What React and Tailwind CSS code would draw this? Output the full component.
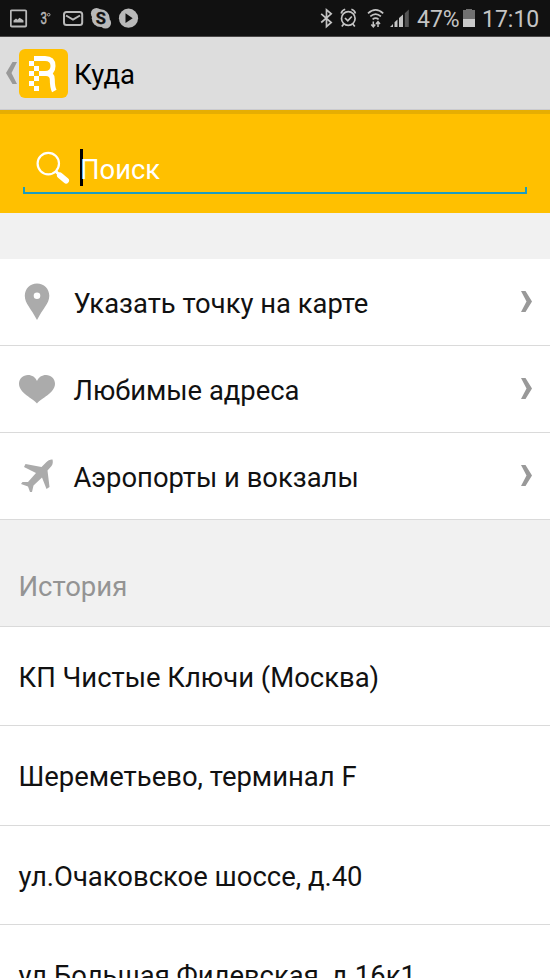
import React from 'react';

const menuItems = [
  { id: 'map', label: 'Указать точку на карте' },
  { id: 'favorites', label: 'Любимые адреса' },
  { id: 'airports', label: 'Аэропорты и вокзалы' },
];

const history = [
  'КП Чистые Ключи (Москва)',
  'Шереметьево, терминал F',
  'ул.Очаковское шоссе, д.40',
  'ул.Большая Филевская, д.16к1',
];

const StatusBar = () => {
  return (
    <div className="flex h-[37px] shrink-0 items-center justify-between border-b border-[#4a4848] bg-[#111] pr-[11px] pl-[10px] text-[#c4c4c4]">
      <svg width="130" height="36" viewBox="10 0 130 36" fill="none" stroke="#b9b9b9" strokeWidth="1.8">
        <rect x="10.8" y="10.3" width="15.4" height="16.2" rx="1" />
        <path d="M13.5 22.5v-2l2.500-2 1.500 1.300 2-2 2.500 1.500 1.500 1.200v2z" fill="#b9b9b9" stroke="none" />
        <text x="40.500" y="24" fill="#b9b9b9" stroke="#b9b9b9" strokeWidth="0.500" fontSize="16" fontFamily="Roboto, sans-serif" textLength="6.500" lengthAdjust="spacingAndGlyphs">3</text>
        <circle cx="48.700" cy="14.700" r="1.300" strokeWidth="0.900" />
        <rect x="64" y="12" width="18.200" height="13" rx="2.500" strokeWidth="2" />
        <path d="M66 15.500l7 4 7-4" strokeWidth="2" />
        <g fill="#b9b9b9" stroke="none">
          <circle cx="100.700" cy="18.200" r="8.900" />
          <circle cx="96.500" cy="13.500" r="5.600" />
          <circle cx="105.500" cy="23" r="5.600" />
          <circle cx="128.500" cy="18.200" r="9.600" />
        </g>
        <text x="100.900" y="24.200" textAnchor="middle" fill="#111" stroke="#111" strokeWidth="0.300" fontSize="16.500" fontWeight="700" fontFamily="Roboto, sans-serif">S</text>
        <path d="M125.500 13.300v9.800l7.200-4.900z" fill="#111" stroke="none" />
      </svg>
      <div className="flex items-center">
        <svg width="92" height="36" viewBox="320 0 92 36" fill="none" stroke="#c4c4c4" strokeWidth="1.700">
          <path d="M321.200 13.800l10 8.700-4.700 4.200V9.800l4.700 4-10 8.700" />
          <circle cx="348.300" cy="18.500" r="6.800" />
          <path d="M345 18l2.800 2.800 4-4.300M341.200 13.500q.8-3.300 4-4.200M355.400 13.500q-.8-3.300-4-4.200M343.800 24l-2 2.500M352.800 24l2 2.500" />
          <path d="M368 13.300q7.600-7 15.200 0M370.300 16.400q5.300-4.600 10.600 0M372.600 19.400q3-2.500 6 0" />
          <path d="M373.300 21.500v5M371.300 24.500l2 2.300 2-2.300M378 27v-5M376 24l2-2.300 2 2.300" strokeWidth="1.500" />
          <g fill="#c4c4c4" stroke="none">
            <path d="M390 27l3-3v3zM394.500 27v-4.800l3-2.700V27zM399 27v-9l4-3.500V27z" />
            <path d="M404.800 27V13.200l4-3.700V27z" fill="#555" />
          </g>
        </svg>
        <span className="ml-[5px] w-[42px] pt-[3px] text-[23px] leading-9 whitespace-nowrap">47%</span>
        <svg className="ml-[4px]" width="12" height="36" viewBox="0 0 12 36">
          <path d="M3 9h6v1h3v9H0v-9h3z" fill="#707070" />
          <path d="M0 19h12v8H0z" fill="#c9c9c9" />
        </svg>
        <span className="ml-[7px] w-[57px] pt-[3px] text-[23px] leading-9 whitespace-nowrap">17:10</span>
      </div>
    </div>
  );
};

const Logo = () => {
  return (
    <svg width="49" height="49" viewBox="0 0 49 49">
      <rect width="49" height="49" rx="6" fill="#ffc000" />
      <g fill="#fff">
        <rect x="15" y="7" width="5" height="5" />
        <rect x="10" y="12" width="5" height="5" />
        <rect x="15" y="17" width="5" height="5" />
        <rect x="10" y="22" width="5" height="5" />
        <rect x="15" y="27" width="5" height="5" />
        <rect x="10" y="32" width="5" height="5" />
        <rect x="15" y="37" width="5" height="5" />
      </g>
      <path d="M19 9.500h7c5.500 0 8 2.500 8 7.500s-2.500 7.500-8 7.500h-6M27 24.500c4.500 0 6.300 2 6.300 6 0 5 .2 8 2 11.500" fill="none" stroke="#fff" strokeWidth="5" />
    </svg>
  );
};

const Header = () => {
  return (
    <header className="flex h-[73px] shrink-0 items-center border-b border-[#cbcbd0] bg-[#ddd] pl-[6px]">
      <svg width="11" height="22" viewBox="0 0 11 22">
        <path d="M6.500 0H11L5.500 11 11 22H6.500L0 11z" fill="#999" />
      </svg>
      <div className="ml-[2px]">
        <Logo />
      </div>
      <h1 className="ml-[6px] pt-[4px] text-[27.500px] leading-8 text-black">Куда</h1>
    </header>
  );
};

const SearchBar = () => {
  return (
    <div className="h-[103px] shrink-0 border-t-4 border-[#e6ae02] bg-[#ffc000] px-[23px] pt-[34px]">
      <div className="flex h-[39px] items-center pl-[13px]">
        <svg width="34" height="34" viewBox="0 0 34 34" fill="none" stroke="#fff">
          <circle cx="12.300" cy="12.600" r="10.700" strokeWidth="2.200" />
          <path d="M20 20.500l3 3" strokeWidth="3" />
          <path d="M24 24.500l6 5" strokeWidth="6" strokeLinecap="round" />
        </svg>
        <span className="ml-[10px] h-[37px] w-[3px] bg-black" />
        <span className="-ml-[3px] pt-[4px] text-[27.400px] leading-8 text-white">Поиск</span>
      </div>
      <div className="h-[7px] border-x-2 border-b-2 border-[#1b9dc0]" />
    </div>
  );
};

const MenuIcon = ({ id }) => {
  if (id === 'map') {
    return (
      <svg width="37" height="38" viewBox="0 0 37 38" fill="#ababab">
        <path fillRule="evenodd" d="M18 0.500c-7 0-12.200 5.300-12.200 12.200C5.800 20.500 12 25 18 37c6-12 12.300-16.500 12.300-24.300C30.300 5.800 25 .5 18 .5zm0 9a3.300 3.300 0 1 1 0 6.600 3.300 3.300 0 0 1 0-6.600z" />
      </svg>
    );
  }
  if (id === 'favorites') {
    return (
      <svg width="37" height="30" viewBox="0 0 37 30" fill="#ababab">
        <path d="M18 29.500C14 24.500 0 19 0 9.800 0 4.500 4 1 9 1c4 0 7.500 2.300 9 6 1.500-3.700 5-6 9-6 5 0 9 3.500 9 8.800C36 19 22 24.500 18 29.500z" />
      </svg>
    );
  }
  return (
    <svg width="37" height="34" viewBox="0 0 37 34" fill="#ababab">
      <path d="M33.500.5C31 .3 29 1.500 27 3.500L22.500 8 6.500 5 5 8l12 6-8 9H3.500L2 25l7 2.500L11 33h2l1.500-6.500 8.500-8 4.500 11.500 3-2-2-16.500 4-4.500c1.500-1.700 1.500-4.500 1-6.500z" />
    </svg>
  );
};

const MenuRow = ({ id, label }) => {
  return (
    <li className="flex h-[87px] items-center border-b border-[#dadada] bg-white pr-[18px] pl-[18.500px]">
      <MenuIcon id={id} />
      <span className="ml-[18px] flex-1 pt-[4px] text-[27.400px] leading-8">{label}</span>
      <svg className="mb-[2px]" width="11" height="21" viewBox="0 0 11 21">
        <path d="M0 0h4.500L11 10.500 4.500 21H0l5.500-10.500z" fill="#999" />
      </svg>
    </li>
  );
};

export default function App() {
  return (
    <div className="flex h-[978px] w-[550px] flex-col overflow-hidden bg-[#f1f1f1] font-[Roboto,sans-serif] text-[#111]">
      <StatusBar />
      <Header />
      <SearchBar />
      <ul className="mt-[46px] shrink-0">
        {menuItems.map((item) => (
          <MenuRow key={item.id} id={item.id} label={item.label} />
        ))}
      </ul>
      <h2 className="h-[107px] shrink-0 border-b border-[#dadada] pt-[51px] pl-[18.500px] text-[27.500px] leading-8 text-[#949494]">
        История
      </h2>
      <ul className="shrink-0">
        {history.map((address) => (
          <li
            key={address}
            className="flex h-[99.300px] items-center border-b border-[#dadada] bg-white pt-[4px] pl-[18.500px] text-[27.450px] leading-8 whitespace-nowrap"
          >
            {address}
          </li>
        ))}
      </ul>
    </div>
  );
}
